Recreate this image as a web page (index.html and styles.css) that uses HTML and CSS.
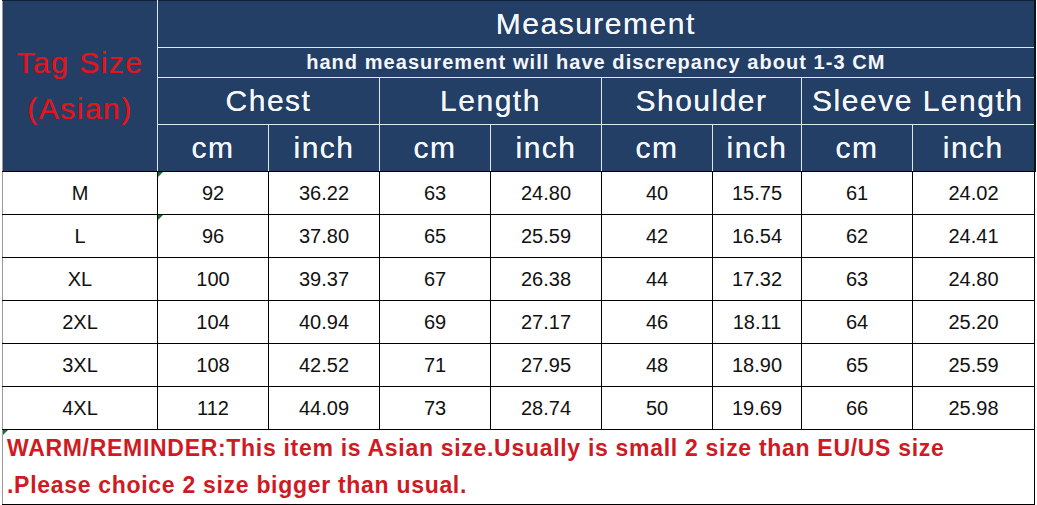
FILE: index.html
```html
<!DOCTYPE html>
<html>
<head>
<meta charset="utf-8">
<link rel="stylesheet" href="styles.css">
</head>
<body>
<table class="sizes">
  <colgroup>
    <col class="c-tag"><col class="c-n"><col class="c-n"><col class="c-n"><col class="c-n"><col class="c-n"><col class="c-s"><col class="c-n"><col class="c-l">
  </colgroup>
  <thead>
    <tr class="h1">
      <th rowspan="4" class="tag">Tag Size<br>(Asian)</th>
      <th colspan="8" class="title">Measurement</th>
    </tr>
    <tr class="h2">
      <th colspan="8" class="note">hand measurement will have discrepancy about 1-3 CM</th>
    </tr>
    <tr class="h3">
      <th colspan="2">Chest</th>
      <th colspan="2">Length</th>
      <th colspan="2">Shoulder</th>
      <th colspan="2">Sleeve Length</th>
    </tr>
    <tr class="h4">
      <th>cm</th><th>inch</th><th>cm</th><th>inch</th><th>cm</th><th>inch</th><th>cm</th><th>inch</th>
    </tr>
  </thead>
  <tbody>
    <tr><td>M</td><td class="mark">92</td><td>36.22</td><td>63</td><td>24.80</td><td>40</td><td>15.75</td><td>61</td><td>24.02</td></tr>
    <tr><td>L</td><td class="mark">96</td><td>37.80</td><td>65</td><td>25.59</td><td>42</td><td>16.54</td><td>62</td><td>24.41</td></tr>
    <tr><td>XL</td><td>100</td><td>39.37</td><td>67</td><td>26.38</td><td>44</td><td>17.32</td><td>63</td><td>24.80</td></tr>
    <tr><td>2XL</td><td>104</td><td>40.94</td><td>69</td><td>27.17</td><td>46</td><td>18.11</td><td>64</td><td>25.20</td></tr>
    <tr><td>3XL</td><td>108</td><td>42.52</td><td>71</td><td>27.95</td><td>48</td><td>18.90</td><td>65</td><td>25.59</td></tr>
    <tr><td>4XL</td><td>112</td><td>44.09</td><td>73</td><td>28.74</td><td>50</td><td>19.69</td><td>66</td><td>25.98</td></tr>
    <tr class="warm"><td colspan="9" class="mark">WARM/REMINDER:This item is Asian size.Usually is small 2 size than EU/US size<br>.Please choice 2 size bigger than usual.</td></tr>
  </tbody>
</table>
</body>
</html>
```
FILE: styles.css
```css
html, body {
  margin: 0;
  padding: 0;
  background: #ffffff;
}
body {
  padding-left: 2px;
}
.sizes {
  border-collapse: collapse;
  table-layout: fixed;
  width: 1033px;
  font-family: "Liberation Sans", Arial, sans-serif;
  border-left: 1px solid #9a9a9a;
}
.c-tag { width: 155px; }
.c-n { width: 111px; }
.c-s { width: 89px; }
.c-l { width: 122px; }

.sizes th {
  background: #233f66;
  color: #f4f7fb;
  font-weight: normal;
  letter-spacing: 1.5px;
  border: 1px solid #dbe8ef;
  padding: 0;
  text-align: center;
  vertical-align: middle;
  font-size: 30px;
  text-shadow: 0 0 0.6px #f4f7fb;
}
.sizes thead tr.h1 th { border-top: 1px solid #10223a; }
.sizes th.tag {
  color: #e0161f;
  text-shadow: 0 0 0.6px #e0161f;
  font-size: 30px;
  line-height: 46px;
  border-left: none;
  border-right: 1px solid #dbe8ef;
  border-bottom: 1px solid #000;
}
.sizes th.title { height: 46px; border-right: 2px solid #111; }
.sizes th.note {
  height: 29px;
  font-size: 20px;
  font-weight: bold;
  letter-spacing: 1.05px;
  text-shadow: none;
  border-right: 2px solid #111;
}
.sizes tr.h3 th { height: 46px; }
.sizes tr.h3 th:last-child { border-right: 2px solid #111; }
.sizes tr.h4 th { height: 46px; border-bottom: 1px solid #000; }
.sizes tr.h4 th:last-child { border-right: 2px solid #111; }

.sizes td {
  border: 1px solid #000;
  height: 42px;
  padding: 0;
  text-align: center;
  vertical-align: middle;
  font-size: 20px;
  color: #111;
}
.sizes td:first-child { border-left: none; }
.sizes td.mark { position: relative; }
.sizes td.mark::before {
  content: "";
  position: absolute;
  left: 0;
  top: 0;
  border-top: 5px solid #1f6b2a;
  border-right: 5px solid transparent;
}
.sizes tr.warm td {
  text-align: left;
  color: #cf1a24;
  font-size: 23px;
  font-weight: bold;
  letter-spacing: 0.7px;
  line-height: 37px;
  height: 73px;
  padding: 0 0 0 4px;
  vertical-align: top;
}
```
